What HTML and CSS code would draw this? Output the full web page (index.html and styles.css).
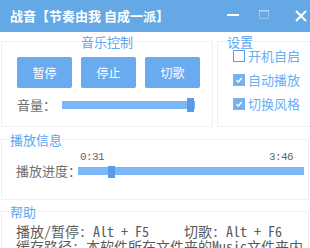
FILE: index.html
```html
<!DOCTYPE html>
<html lang="zh">
<head>
<meta charset="utf-8">
<title>战音</title>
<link rel="stylesheet" href="styles.css">
</head>
<body>
<header class="titlebar">
  <span class="title">战音【节奏由我 自成一派】</span>
  <div class="controls">
    <svg class="ic-min" viewBox="0 0 12 12"><rect x="0" y="4" width="12" height="2" fill="#fff"/></svg>
    <svg class="ic-max" viewBox="0 0 10 12"><rect x="0.5" y="0.5" width="9" height="8" fill="none" stroke="#fff" stroke-opacity="0.3"/><rect x="0" y="0" width="10" height="2" fill="#fff" fill-opacity="0.3"/></svg>
    <svg class="ic-close" viewBox="0 0 12 12"><path d="M1 1 L11 11 M11 1 L1 11" stroke="#fff" stroke-width="2" fill="none"/></svg>
  </div>
</header>
<div class="top">
  <fieldset class="group music">
    <legend class="gt">音乐控制</legend>
    <div class="btns">
      <button class="btn">暂停</button>
      <button class="btn">停止</button>
      <button class="btn">切歌</button>
    </div>
    <div class="row vol">
      <span class="lab">音量：</span>
      <div class="track"><span class="thumb" style="left:125px"></span></div>
    </div>
  </fieldset>
  <fieldset class="group settings">
    <legend class="gt">设置</legend>
    <label class="cb"><span class="box"></span>开机自启</label>
    <label class="cb"><span class="box on"><svg viewBox="0 0 12 12"><path d="M3 6.2 L5.2 8.4 L9.2 3.6" stroke="#fff" stroke-width="1.6" fill="none"/></svg></span>自动播放</label>
    <label class="cb"><span class="box on"><svg viewBox="0 0 12 12"><path d="M3 6.2 L5.2 8.4 L9.2 3.6" stroke="#fff" stroke-width="1.6" fill="none"/></svg></span>切换风格</label>
  </fieldset>
</div>
<fieldset class="group play">
  <legend class="gt">播放信息</legend>
  <div class="times"><span>0:31</span><span>3:46</span></div>
  <div class="row prog">
    <span class="lab">播放进度：</span>
    <div class="track"><span class="thumb" style="left:30px"></span></div>
  </div>
</fieldset>
<fieldset class="group help">
  <legend class="gt">帮助</legend>
  <div class="help-text">播放/暂停: Alt + F5     切歌: Alt + F6
缓存路径: 本软件所在文件夹的Music文件夹内</div>
</fieldset>
</body>
</html>
```
FILE: styles.css
```css
* { box-sizing: border-box; }
html, body { margin: 0; padding: 0; }
body {
  width: 310px;
  height: 248px;
  overflow: hidden;
  background: #fff;
  font-family: "Noto Sans CJK SC", "Noto Sans", sans-serif;
}
.titlebar {
  height: 32px;
  background: #64a9e6;
  display: flex;
  align-items: center;
  padding-left: 10px;
  color: #fff;
}
.title {
  font-size: 13px;
  font-weight: bold;
  line-height: 16px;
  white-space: nowrap;
}
.controls {
  margin-left: auto;
  display: flex;
  align-items: center;
  padding-right: 3px;
}
.ic-min { width: 12px; height: 12px; }
.ic-max { width: 10px; height: 12px; margin-left: 20px; }
.ic-close { width: 12px; height: 12px; margin-left: 26px; }

.group {
  margin: 0;
  padding: 0;
  border: 1px solid #f1f1f1;
  min-width: 0;
}
.gt {
  padding: 0;
  font-size: 13px;
  line-height: 13px;
  color: #5ba6f3;
  white-space: nowrap;
}
.top {
  display: flex;
  margin-top: 3px;
}
.music {
  margin-left: 1px;
  width: 212px;
  height: 92px;
  padding: 9px 15px 0 15px;
}
.music .gt { margin-left: auto; margin-right: auto; }
.btns { display: flex; gap: 9px; }
.btn {
  width: 55px;
  height: 31px;
  flex: none;
  border: 0;
  border-radius: 2px;
  background: #6aabf0;
  color: #fff;
  font-family: inherit;
  font-size: 12px;
  padding: 0;
}
.row {
  display: flex;
  align-items: center;
  height: 14px;
}
.vol { margin-top: 10px; margin-right: -15px; }
.lab {
  flex: none;
  font-size: 13px;
  line-height: 14px;
  color: #6e6e6e;
  white-space: nowrap;
}
.vol .lab { width: 45px; }
.track {
  position: relative;
  height: 8px;
  background: #7ab8f8;
}
.vol .track { width: 133px; }
.thumb {
  position: absolute;
  width: 7px;
  background: #5b9be3;
}
.vol .thumb { top: -3px; height: 14px; }

.settings {
  margin-left: 4px;
  margin-right: -3px;
  flex: 1;
  height: 92px;
  padding: 1px 0 0 9px;
}
.cb {
  display: flex;
  align-items: center;
  height: 14px;
  margin-left: 6px;
  gap: 3px;
  font-size: 13px;
  line-height: 14px;
  color: #6aaef6;
  white-space: nowrap;
}
.cb + .cb { margin-top: 10px; }
.box {
  width: 12px;
  height: 12px;
  flex: none;
  border: 1px solid #5a9ef0;
  background: #fff;
  display: flex;
}
.box.on {
  background: #76b3f5;
  border-color: #76b3f5;
}
.box svg { width: 10px; height: 10px; }

.play {
  margin: 6px 1px 0 1px;
  height: 67px;
  padding: 5px 2px 0 8px;
}
.times {
  display: flex;
  justify-content: space-between;
  margin-left: 70px;
  margin-right: 13px;
  font-family: "Liberation Mono", monospace;
  font-size: 11px;
  line-height: 12px;
  letter-spacing: -0.6px;
  color: #666;
}
.prog { margin-top: 1px; }
.prog .lab { width: 62px; margin-left: 6px; }
.prog .track { flex: 1; margin-right: 2px; }
.prog .thumb { top: -1px; height: 12px; }

.help {
  margin: 5px 1px 0 1px;
  padding: 6px 0 0 8px;
}
.help-text {
  margin-left: 6px;
  font-family: "Noto Sans Mono CJK SC", "Liberation Mono", monospace;
  font-size: 14px;
  line-height: 15px;
  color: #5a5a5a;
  white-space: pre;
}
```
